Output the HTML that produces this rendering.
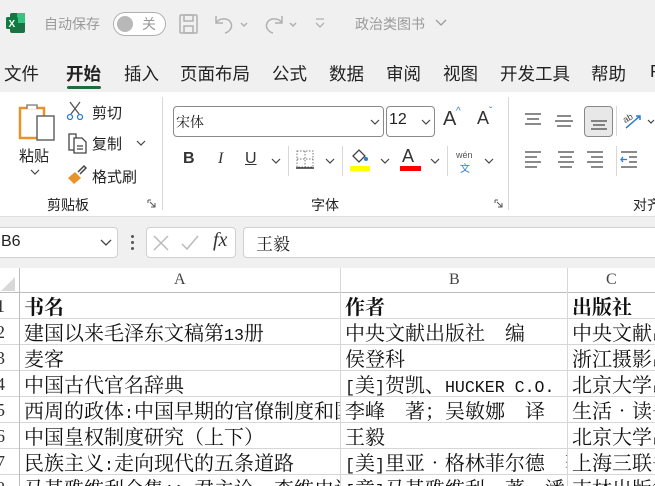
<!DOCTYPE html>
<html><head><meta charset="utf-8"><style>
*{margin:0;padding:0;box-sizing:border-box}
html,body{width:655px;height:486px;overflow:hidden}
body{background:#f0f0f0;font-family:"Liberation Sans","Noto Sans CJK SC",sans-serif;color:#222}
#w{position:relative;width:655px;height:486px;overflow:hidden}
.a{position:absolute;white-space:nowrap}
.t{font-size:17.5px;top:61px;color:#222}
.rib{position:absolute;left:0;top:92px;width:655px;height:125px;background:#fff;border-bottom:1px solid #e0e0e0}
.s{font-size:14px}
.sep{position:absolute;width:1px;background:#d8d8d8}
.box{position:absolute;border:1px solid #8a8a8a;border-radius:4px;background:#fff}
.grid{position:absolute;left:0;top:268px;width:655px;height:218px;background:#fff;overflow:hidden}
.c{position:absolute;font-family:"Noto Serif CJK SC","Liberation Serif",serif;font-size:20px;line-height:26px;white-space:nowrap;overflow:hidden;color:#111}
.m{font-family:"Liberation Mono",monospace;font-size:16.6px}
.hl{position:absolute;height:1px;background:#d6d6d6;left:0;width:655px}
.vl{position:absolute;width:1px;background:#d6d6d6;top:0;height:218px}
.rn{position:absolute;left:-4px;font-family:"Liberation Serif",serif;font-size:18px;line-height:26px;color:#333}
</style></head><body><div id="w">
<svg class="a" style="left:6px;top:12px" width="20" height="22"><rect x="4" y="1" width="15" height="20" rx="2" fill="#1e7145"/><rect x="11" y="1" width="8" height="10" fill="#33c481"/><rect x="0" y="5" width="12" height="12" rx="1.5" fill="#107c41"/><text x="2.5" y="15" font-size="10" fill="#fff" font-family="Liberation Sans" font-weight="bold">X</text></svg>
<div class="a" style="left:44px;top:14px;font-size:14px;color:#9a9a9a">自动保存</div>
<div class="a" style="left:113px;top:12px;width:53px;height:24px;border:1.5px solid #b0b0b0;border-radius:12px;background:#fff"></div>
<div class="a" style="left:117px;top:16px;width:16px;height:16px;border-radius:50%;background:#b8b8b8"></div>
<div class="a" style="left:142px;top:14px;font-size:14px;color:#9a9a9a">关</div>
<svg class="a" style="left:178px;top:13px" width="22" height="22" fill="none" stroke="#b0b0b0" stroke-width="1.5"><rect x="2" y="2" width="17" height="18" rx="1"/><rect x="6" y="2" width="9" height="6"/><rect x="6" y="13" width="9" height="7"/></svg>
<svg class="a" style="left:212px;top:12px" width="36" height="24" fill="none" stroke="#b0b0b0" stroke-width="1.5"><path d="M4 4v7h7M4 11c3-5 12-6 15 0c2 5-2 9-6 10"/><path d="M29 11l3 3 3-3"/></svg>
<svg class="a" style="left:262px;top:12px" width="36" height="24" fill="none" stroke="#b0b0b0" stroke-width="1.5"><path d="M20 4v7h-7M20 11c-3-5-12-6-15 0c-2 5 2 9 6 10"/><path d="M28 11l3 3 3-3"/></svg>
<svg class="a" style="left:314px;top:16px" width="12" height="14" fill="none" stroke="#b0b0b0" stroke-width="1.3"><path d="M2 3h8M2 7l4 4 4-4"/></svg>
<div class="a" style="left:355px;top:14px;font-size:14px;color:#9a9a9a">政治类图书</div>
<svg class="a" style="left:435px;top:18px" width="12" height="10" fill="none" stroke="#9a9a9a" stroke-width="1.3"><path d="M1 2l5 5 5-5"/></svg>
<div class="a t" style="left:4px">文件</div>
<div class="a t" style="left:66px;font-weight:bold">开始</div>
<div class="a" style="left:67px;top:86px;width:34px;height:3px;background:#1e6b3e;border-radius:2px"></div>
<div class="a t" style="left:124px">插入</div>
<div class="a t" style="left:180px">页面布局</div>
<div class="a t" style="left:272px">公式</div>
<div class="a t" style="left:329px">数据</div>
<div class="a t" style="left:386px">审阅</div>
<div class="a t" style="left:443px">视图</div>
<div class="a t" style="left:500px">开发工具</div>
<div class="a t" style="left:591px">帮助</div>
<div class="a t" style="left:650px">P</div>
<div class="rib"></div>
<svg class="a" style="left:18px;top:102px" width="38" height="40"><rect x="2" y="6" width="24" height="30" fill="#fff" stroke="#e8922c" stroke-width="2.5"/><path d="M9 7v-4h10v4" fill="#fff" stroke="#777" stroke-width="1.3"/><rect x="19" y="14" width="17" height="24" fill="#fff" stroke="#666" stroke-width="1.5"/></svg>
<div class="a s" style="left:19px;top:145px;font-size:15px">粘贴</div>
<svg class="a" style="left:30px;top:168px" width="10" height="8" fill="none" stroke="#444" stroke-width="1.2"><path d="M1 2l4 4 4-4"/></svg>
<svg class="a" style="left:66px;top:101px" width="18" height="20" fill="none" stroke="#555" stroke-width="1.3"><path d="M4 1l9 12M14 1l-9 12"/><circle cx="4" cy="16" r="2.5" stroke="#2b7cd3"/><circle cx="14" cy="16" r="2.5" stroke="#2b7cd3"/></svg>
<div class="a s" style="left:92px;top:102px;font-size:15px">剪切</div>
<svg class="a" style="left:66px;top:132px" width="22" height="22" fill="none" stroke="#444" stroke-width="1.3"><path d="M3 2h7v16H3z"/><path d="M8 6h8l4 4v11H8z" fill="#fff"/><path d="M11 14h6M11 17h6"/></svg>
<div class="a s" style="left:92px;top:133px;font-size:15px">复制</div>
<svg class="a" style="left:136px;top:139px" width="10" height="8" fill="none" stroke="#444" stroke-width="1.2"><path d="M1 2l4 4 4-4"/></svg>
<svg class="a" style="left:66px;top:164px" width="22" height="22"><path d="M2 14l7-6 6 6-7 6z" fill="#e8922c"/><path d="M12 8l6-6 2 2-6 6" fill="none" stroke="#444" stroke-width="1.5"/></svg>
<div class="a s" style="left:92px;top:166px;font-size:15px">格式刷</div>
<div class="a s" style="left:47px;top:195px">剪贴板</div>
<svg class="a" style="left:147px;top:199px" width="10" height="10" fill="none" stroke="#555" stroke-width="1"><path d="M1 1h3M1 1v3M3 3l5 5M8 4v4H4"/></svg>
<div class="sep" style="left:162px;top:97px;height:113px"></div>
<div class="box" style="left:173px;top:106px;width:211px;height:31px"></div>
<div class="a" style="left:176px;top:112px;font-size:14px;font-family:'Noto Serif CJK SC',serif">宋体</div>
<svg class="a" style="left:370px;top:118px" width="10" height="8" fill="none" stroke="#444" stroke-width="1.2"><path d="M1 2l4 4 4-4"/></svg>
<div class="box" style="left:386px;top:106px;width:49px;height:31px"></div>
<div class="a" style="left:389px;top:111px;font-size:16px">12</div>
<svg class="a" style="left:421px;top:118px" width="10" height="8" fill="none" stroke="#444" stroke-width="1.2"><path d="M1 2l4 4 4-4"/></svg>
<div class="a" style="left:443px;top:108px;font-size:20px;color:#333">A</div><div class="a" style="left:456px;top:106px;font-size:10px;color:#2b7cd3">^</div>
<div class="a" style="left:477px;top:108px;font-size:18px;color:#333">A</div><div class="a" style="left:489px;top:106px;font-size:10px;color:#2b7cd3">ˇ</div>
<div class="a" style="left:183px;top:150px;font-size:16px;font-weight:bold;color:#333">B</div>
<div class="a" style="left:218px;top:150px;font-size:16px;font-style:italic;font-family:'Liberation Serif';color:#333">I</div>
<div class="a" style="left:245px;top:150px;font-size:16px;text-decoration:underline;color:#333">U</div>
<svg class="a" style="left:271px;top:157px" width="10" height="8" fill="none" stroke="#444" stroke-width="1.2"><path d="M1 2l4 4 4-4"/></svg>
<div class="sep" style="left:288px;top:146px;height:30px"></div>
<svg class="a" style="left:295px;top:149px" width="22" height="22" fill="none" stroke="#777" stroke-width="1" stroke-dasharray="1.5 1.5"><rect x="2" y="2" width="16" height="16"/><path d="M10 2v16M2 10h16"/><path d="M1 19h18" stroke="#333" stroke-dasharray="none" stroke-width="1.5"/></svg>
<svg class="a" style="left:325px;top:157px" width="10" height="8" fill="none" stroke="#444" stroke-width="1.2"><path d="M1 2l4 4 4-4"/></svg>
<div class="sep" style="left:342px;top:146px;height:30px"></div>
<svg class="a" style="left:348px;top:148px" width="24" height="16" fill="none" stroke="#444" stroke-width="1.3"><path d="M5 8l6-6 6 6-6 6z"/><circle cx="18" cy="11" r="2" fill="#2b7cd3" stroke="none"/></svg>
<div class="a" style="left:350px;top:166px;width:20px;height:5px;background:#ffff00"></div>
<svg class="a" style="left:380px;top:157px" width="10" height="8" fill="none" stroke="#444" stroke-width="1.2"><path d="M1 2l4 4 4-4"/></svg>
<div class="a" style="left:402px;top:146px;font-size:18px;color:#333">A</div>
<div class="a" style="left:400px;top:166px;width:21px;height:5px;background:#ff0000"></div>
<svg class="a" style="left:430px;top:157px" width="10" height="8" fill="none" stroke="#444" stroke-width="1.2"><path d="M1 2l4 4 4-4"/></svg>
<div class="sep" style="left:447px;top:146px;height:30px"></div>
<div class="a" style="left:456px;top:150px;font-size:9px;color:#555">wén</div>
<div class="a" style="left:460px;top:160px;font-size:10px;color:#2b7cd3">文</div>
<svg class="a" style="left:484px;top:157px" width="10" height="8" fill="none" stroke="#444" stroke-width="1.2"><path d="M1 2l4 4 4-4"/></svg>
<div class="a s" style="left:311px;top:195px">字体</div>
<svg class="a" style="left:494px;top:199px" width="10" height="10" fill="none" stroke="#555" stroke-width="1"><path d="M1 1h3M1 1v3M3 3l5 5M8 4v4H4"/></svg>
<div class="sep" style="left:508px;top:97px;height:113px"></div>
<svg class="a" style="left:523px;top:110px" width="60" height="22" fill="none" stroke="#444" stroke-width="1.3"><path d="M2 4h16M4 9h12M2 14h16"/><path d="M34 6h14M32 11h18M34 16h14"/></svg>
<div class="a" style="left:584px;top:106px;width:29px;height:31px;border:1px solid #888;border-radius:4px;background:#e8e8e8"></div>
<svg class="a" style="left:588px;top:116px" width="22" height="16" fill="none" stroke="#444" stroke-width="1.3"><path d="M3 5h16M5 9h12M3 13h16"/></svg>
<div class="sep" style="left:616px;top:106px;height:30px"></div>
<svg class="a" style="left:622px;top:108px" width="33" height="24" fill="none" stroke="#2b7cd3" stroke-width="1.5"><text x="1" y="12" font-size="9" fill="#444" stroke="none" transform="rotate(-30 8 10)">ab</text><path d="M4 20l14-12M14 8h4v4"/><path d="M26 12l3 3 3-3" stroke="#444" stroke-width="1.2"/></svg>
<svg class="a" style="left:523px;top:149px" width="132" height="22" fill="none" stroke="#444" stroke-width="1.3"><path d="M2 3h16M2 8h12M2 13h16M2 18h12"/><path d="M35 3h16M37 8h12M35 13h16M37 18h12"/><path d="M64 3h16M68 8h12M64 13h16M68 18h12"/><path d="M98 3h16M106 8h8M106 13h8M98 18h16"/><path d="M104 10.5h-6M100 8l-2 2.5 2 2.5" stroke="#2b7cd3"/></svg>
<div class="sep" style="left:616px;top:146px;height:30px"></div>
<div class="a s" style="left:633px;top:195px">对齐</div>
<div class="a" style="left:-4px;top:227px;width:122px;height:31px;background:#fff;border:1px solid #d0d0d0;border-radius:4px"></div>
<div class="a" style="left:1px;top:233px;font-size:16px">B6</div>
<svg class="a" style="left:100px;top:238px" width="12" height="10" fill="none" stroke="#444" stroke-width="1.3"><path d="M1 2l5 5 5-5"/></svg>
<div class="a" style="left:131px;top:235px;width:3px;height:3px;background:#555;border-radius:50%"></div>
<div class="a" style="left:131px;top:241px;width:3px;height:3px;background:#555;border-radius:50%"></div>
<div class="a" style="left:131px;top:247px;width:3px;height:3px;background:#555;border-radius:50%"></div>
<div class="a" style="left:146px;top:227px;width:90px;height:31px;background:#fff;border:1px solid #d0d0d0;border-radius:4px"></div>
<svg class="a" style="left:150px;top:233px" width="60" height="20" fill="none" stroke="#bbb" stroke-width="1.5"><path d="M4 3l14 14M18 3L4 17"/><path d="M32 11l5 5 11-13"/></svg>
<div class="a" style="left:213px;top:229px;font-size:20px;font-style:italic;font-family:'Liberation Serif',serif;color:#333">fx</div>
<div class="a" style="left:243px;top:227px;width:412px;height:31px;background:#fff;border:1px solid #d0d0d0;border-right:none;border-radius:4px 0 0 4px"></div>
<div class="a" style="left:256px;top:230px;font-size:17px;font-family:'Noto Serif CJK SC',serif">王毅</div>
<div class="grid">
<svg class="a" style="left:0;top:8px" width="16" height="16"><path d="M15 1v14H1z" fill="#d8d8d8"/></svg>
<div class="c" style="left:174px;top:0;line-height:24px;font-size:16px;color:#444;font-family:'Liberation Serif',serif">A</div>
<div class="c" style="left:449px;top:0;line-height:24px;font-size:16px;color:#444;font-family:'Liberation Serif',serif">B</div>
<div class="c" style="left:606px;top:0;line-height:24px;font-size:16px;color:#444;font-family:'Liberation Serif',serif">C</div>
<div class="hl" style="top:24px;background:#bdbdbd"></div>
<div class="hl" style="top:50px"></div><div class="hl" style="top:76px"></div><div class="hl" style="top:102px"></div><div class="hl" style="top:128px"></div><div class="hl" style="top:154px"></div><div class="hl" style="top:180px"></div><div class="hl" style="top:206px"></div>
<div class="vl" style="left:19px;background:#bdbdbd"></div>
<div class="vl" style="left:340px"></div>
<div class="vl" style="left:567px"></div>
<div class="rn" style="top:25px">1</div><div class="rn" style="top:51px">2</div><div class="rn" style="top:77px">3</div><div class="rn" style="top:103px">4</div><div class="rn" style="top:129px">5</div><div class="rn" style="top:155px">6</div><div class="rn" style="top:181px">7</div><div class="rn" style="top:207px">8</div>
<div class="c" style="left:24px;top:25px;width:316px;font-weight:bold">书名</div>
<div class="c" style="left:345px;top:25px;width:222px;font-weight:bold">作者</div>
<div class="c" style="left:572px;top:25px;width:83px;font-weight:bold">出版社</div>
<div class="c" style="left:24px;top:51px;width:316px">建国以来毛泽东文稿第<span class="m">13</span>册</div>
<div class="c" style="left:345px;top:51px;width:222px">中央文献出版社　编</div>
<div class="c" style="left:572px;top:51px;width:83px">中央文献出版社</div>
<div class="c" style="left:24px;top:77px;width:316px">麦客</div>
<div class="c" style="left:345px;top:77px;width:222px">侯登科</div>
<div class="c" style="left:572px;top:77px;width:83px">浙江摄影出版社</div>
<div class="c" style="left:24px;top:103px;width:316px">中国古代官名辞典</div>
<div class="c" style="left:345px;top:103px;width:222px"><span class="m">[</span>美<span class="m">]</span>贺凯、<span class="m">HUCKER C.O.</span></div>
<div class="c" style="left:572px;top:103px;width:83px">北京大学出版社</div>
<div class="c" style="left:24px;top:129px;width:316px">西周的政体<span class="m">:</span>中国早期的官僚制度和国家</div>
<div class="c" style="left:345px;top:129px;width:222px">李峰　著；吴敏娜　译</div>
<div class="c" style="left:572px;top:129px;width:83px">生活•读书</div>
<div class="c" style="left:24px;top:155px;width:316px">中国皇权制度研究（上下）</div>
<div class="c" style="left:345px;top:155px;width:222px">王毅</div>
<div class="c" style="left:572px;top:155px;width:83px">北京大学出版社</div>
<div class="c" style="left:24px;top:181px;width:316px">民族主义<span class="m">:</span>走向现代的五条道路</div>
<div class="c" style="left:345px;top:181px;width:222px"><span class="m">[</span>美<span class="m">]</span>里亚•格林菲尔德　著</div>
<div class="c" style="left:572px;top:181px;width:83px">上海三联书店</div>
<div class="c" style="left:24px;top:207px;width:316px">马基雅维利全集<span class="m">1</span>：君主论•李维史论</div>
<div class="c" style="left:345px;top:207px;width:222px"><span class="m">[</span>意<span class="m">]</span>马基雅维利　著　潘</div>
<div class="c" style="left:572px;top:207px;width:83px">吉林出版集团</div>
</div>
</div></body></html>
